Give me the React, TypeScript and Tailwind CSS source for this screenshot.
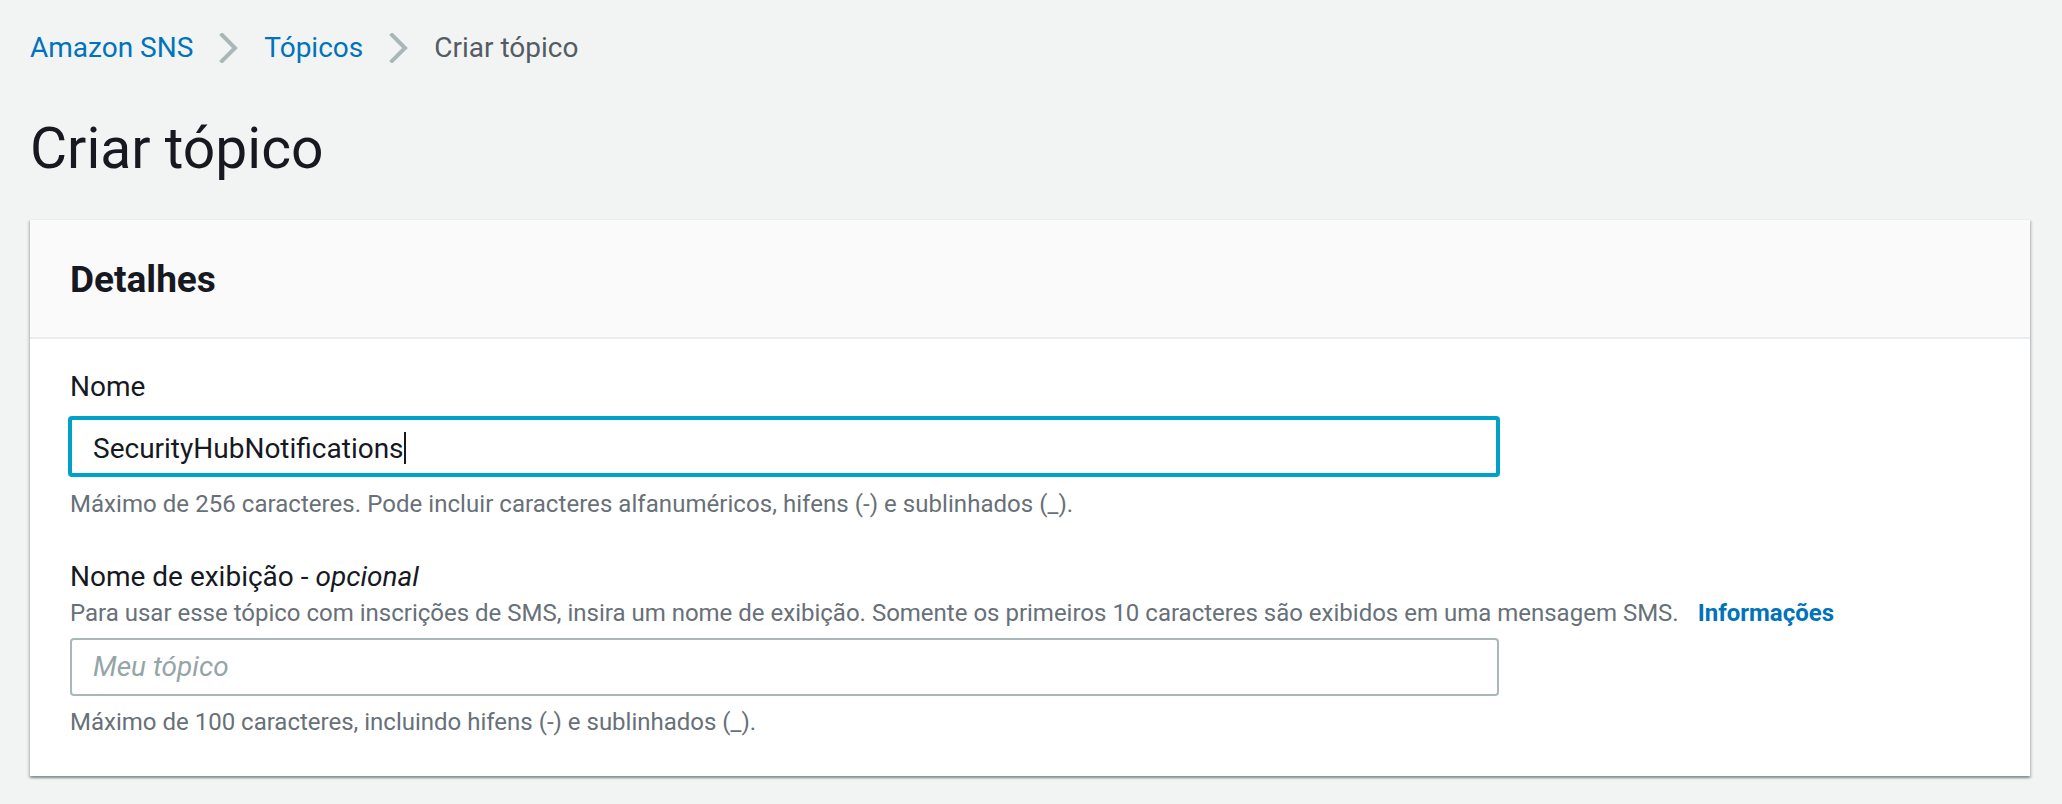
function Chevron() {
  return (
    <svg width="19" height="30" viewBox="0 0 19 30" className="mx-[26px] shrink-0">
      <path d="M3 2 L16 15 L3 28" fill="none" stroke="#aab7b8" strokeWidth="4" strokeLinecap="square" />
    </svg>
  );
}

export default function App() {
  return (
    <div className="min-h-screen bg-[#f2f3f3] px-[30px] pt-[28px] font-['Roboto',sans-serif] text-[#16191f]">
      {/* breadcrumbs */}
      <nav className="flex h-[40px] items-center text-[28px] leading-[40px]">
        <a className="text-[#0073bb]" href="#">Amazon SNS</a>
        <Chevron />
        <a className="text-[#0073bb]" href="#">Tópicos</a>
        <Chevron />
        <span className="text-[#545b64]">Criar tópico</span>
      </nav>

      <h1 className="mt-[41px] h-[80px] text-[57px] font-normal leading-[80px]">Criar tópico</h1>

      <section className="mt-[30px] w-[2000px] bg-white shadow-[0_2px_2px_0_rgba(0,28,36,0.3),2px_2px_2px_0_rgba(0,28,36,0.12),-2px_2px_2px_0_rgba(0,28,36,0.12)]">
        <div className="border-t border-[#eaeded] bg-[#fafafa] px-[40px] pb-[33px] pt-[36px]">
          <h2 className="text-[37px] font-bold leading-[48px]">Detalhes</h2>
        </div>
        <div className="border-t-2 border-[#eaeded] px-[40px] pb-[38px] pt-[28px]">
          <div className="text-[28px] leading-[40px]">Nome</div>
          <div className="-ml-[2px] mt-[9px] h-[61px] w-[1432px] rounded-[4px] border-4 border-[#00a1c9] bg-white px-[21px] pt-[9px]">
            <div className="flex items-start text-[28px] leading-[40px]">
              <span>SecurityHubNotifications</span>
              <span className="mt-[3px] h-[32px] w-[2px] bg-[#16191f]" />
            </div>
          </div>
          <div className="mt-[11px] text-[24px] leading-[32px] tracking-[0.05px] text-[#687078]">
            Máximo de 256 caracteres. Pode incluir caracteres alfanuméricos, hifens (-) e sublinhados (_).
          </div>

          <div className="mt-[37px] text-[28px] leading-[40px]">
            Nome de exibição - <i>opcional</i>
          </div>
          <div className="text-[24px] leading-[32px] text-[#687078]">
            Para usar esse tópico com inscrições de SMS, insira um nome de exibição. Somente os primeiros 10 caracteres são
            exibidos em uma mensagem SMS.
            <a className="ml-[19px] font-bold text-[#0073bb]" href="#">Informações</a>
          </div>
          <div className="mt-[9px] h-[58px] w-[1429px] rounded-[4px] border-2 border-[#aab7b8] bg-white px-[21px] pt-[7px]">
            <div className="text-[28px] italic leading-[40px] text-[#95a5a6]">Meu tópico</div>
          </div>
          <div className="mt-[10px] text-[24px] leading-[32px] text-[#687078]">
            Máximo de 100 caracteres, incluindo hifens (-) e sublinhados (_).
          </div>
        </div>
      </section>
    </div>
  );
}
